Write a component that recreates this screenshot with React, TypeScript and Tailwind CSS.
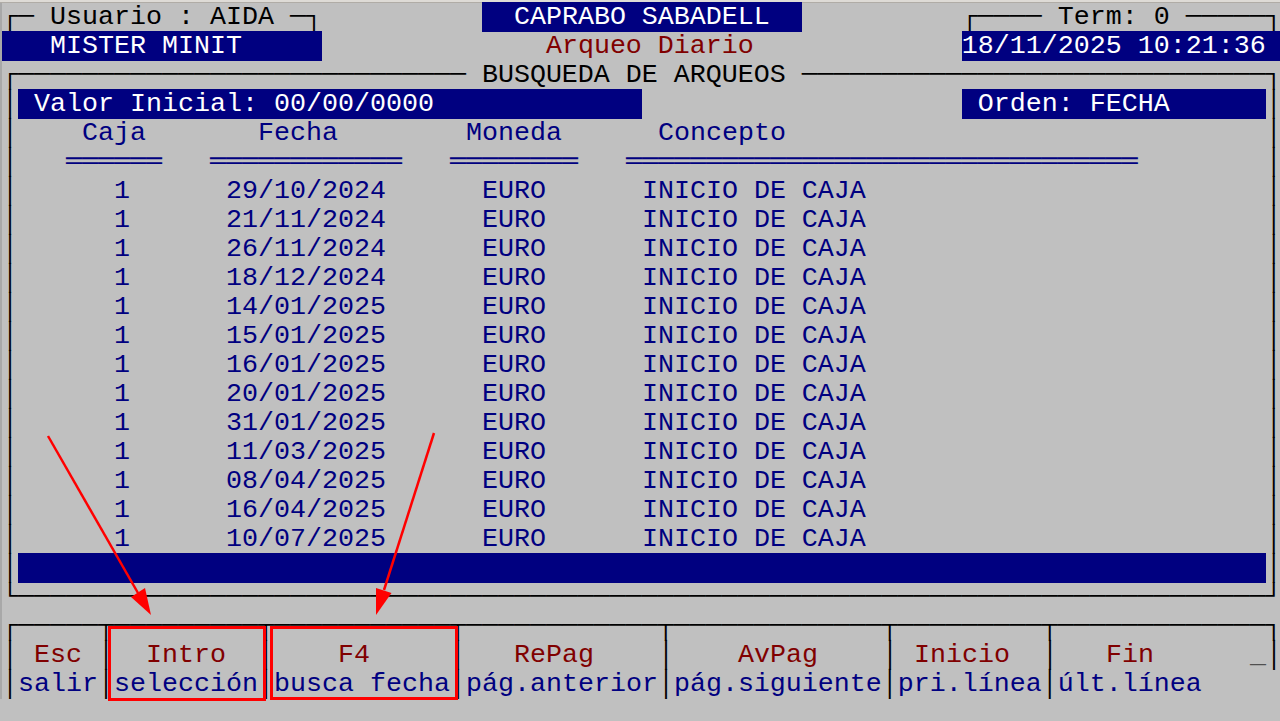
import React from 'react';

// Terminal-style screen: 80 cols x 24 rows, 16px x 29px cells.
type Seg = [number, string, string?];

const NAV = 'bg-[#000080] text-white';
const BLUE = 'text-[#000080]';
const RED = 'text-[#800000]';

const pad = (s: string, n: number) => s + ' '.repeat(Math.max(0, n - s.length));
const dash = (n: number) => '─'.repeat(n);

const fechas = [
  '29/10/2024',
  '21/11/2024',
  '26/11/2024',
  '18/12/2024',
  '14/01/2025',
  '15/01/2025',
  '16/01/2025',
  '20/01/2025',
  '31/01/2025',
  '11/03/2025',
  '08/04/2025',
  '16/04/2025',
  '10/07/2025',
];

const seps = [0, 6, 16, 28, 41, 55, 65];

function keyRow(items: [number, string][], cls: string, withRight: boolean): Seg[] {
  const segs: Seg[] = [];
  seps.forEach((c) => segs.push([c, '│']));
  items.forEach(([c, t]) => segs.push([c, t, cls]));
  if (withRight) segs.push([79, '│']);
  return segs.sort((a, b) => a[0] - b[0]);
}

const rows: Seg[][] = [
  [
    [0, '┌─ Usuario : AIDA ─┐'],
    [30, '  CAPRABO SABADELL  ', NAV],
    [60, '┌' + dash(4) + ' Term: 0 ' + dash(5) + '┐'],
  ],
  [
    [0, pad('   MISTER MINIT', 20), NAV],
    [34, 'Arqueo Diario', RED],
    [60, '18/11/2025 10:21:36 ', NAV],
  ],
  [[0, '┌' + dash(28) + ' BUSQUEDA DE ARQUEOS ' + dash(29) + '┐']],
  [
    [0, '│'],
    [1, pad(' Valor Inicial: 00/00/0000', 39), NAV],
    [60, pad(' Orden: FECHA', 19), NAV],
    [79, '│'],
  ],
  [
    [0, '│'],
    [5, 'Caja', BLUE],
    [16, 'Fecha', BLUE],
    [29, 'Moneda', BLUE],
    [41, 'Concepto', BLUE],
    [79, '│'],
  ],
  [
    [0, '│'],
    [4, '═'.repeat(6), BLUE],
    [13, '═'.repeat(12), BLUE],
    [28, '═'.repeat(8), BLUE],
    [39, '═'.repeat(32), BLUE],
    [79, '│'],
  ],
  ...fechas.map(
    (f): Seg[] => [
      [0, '│'],
      [7, '1', BLUE],
      [14, f, BLUE],
      [30, 'EURO', BLUE],
      [40, 'INICIO DE CAJA', BLUE],
      [79, '│'],
    ],
  ),
  [
    [0, '│'],
    [1, ' '.repeat(78), NAV],
    [79, '│'],
  ],
  [[0, '└' + dash(78) + '┘']],
  [
    [
      0,
      '┌' +
        dash(5) +
        '┬' +
        dash(9) +
        '┬' +
        dash(11) +
        '┬' +
        dash(12) +
        '┬' +
        dash(13) +
        '┬' +
        dash(9) +
        '┬' +
        dash(13) +
        '┐',
    ],
  ],
  [
    ...keyRow(
      [
        [2, 'Esc'],
        [9, 'Intro'],
        [21, 'F4'],
        [32, 'RePag'],
        [46, 'AvPag'],
        [57, 'Inicio'],
        [69, 'Fin'],
      ],
      RED,
      false,
    ),
    [78, '_', 'text-[#505050]'],
    [79, '│'],
  ],
  keyRow(
    [
      [1, 'salir'],
      [7, 'selección'],
      [17, 'busca fecha'],
      [29, 'pág.anterior'],
      [42, 'pág.siguiente'],
      [56, 'pri.línea'],
      [66, 'últ.línea'],
    ],
    BLUE,
    false,
  ),
];

function Row({ segs }: { segs: Seg[] }) {
  const out: React.ReactNode[] = [];
  let cur = 0;
  segs.forEach(([col, text, cls], i) => {
    if (col > cur) out.push(<span key={`g${i}`}>{' '.repeat(col - cur)}</span>);
    out.push(
      <span key={i} className={cls}>
        {text}
      </span>,
    );
    cur = col + text.length;
  });
  return <div className="h-[29px] whitespace-pre">{out}</div>;
}

export default function App() {
  return (
    <div className="relative h-[721px] w-[1280px] overflow-hidden bg-[#c0c0c0]">
      <div className="h-[3px] border-b border-[#b0aca6] bg-[#dedbd6]" />
      <div className="flex">
        <div className="w-[2px] shrink-0 bg-[#a8a8a8]" />
        <div className="font-['Liberation_Mono','DejaVu_Sans_Mono',monospace] text-[26.667px] leading-[29px] text-black">
          {rows.map((segs, i) => (
            <Row key={i} segs={segs} />
          ))}
        </div>
      </div>

      {/* annotation overlay */}
      <svg className="pointer-events-none absolute inset-0" width={1280} height={721}>
        <g stroke="#ff0000" fill="none">
          <rect x={109.5} y={627.5} width={155} height={72} strokeWidth={3} />
          <rect x={271.5} y={627.5} width={185} height={71} strokeWidth={3} />
          <line x1={48} y1={436} x2={138} y2={593} strokeWidth={2.5} />
          <line x1={434} y1={433} x2={384} y2={590} strokeWidth={2.5} />
        </g>
        <g fill="#ff0000">
          <polygon points="151,615 145,588 131,597" />
          <polygon points="376,615 376,588 391.5,593" />
        </g>
      </svg>
    </div>
  );
}
